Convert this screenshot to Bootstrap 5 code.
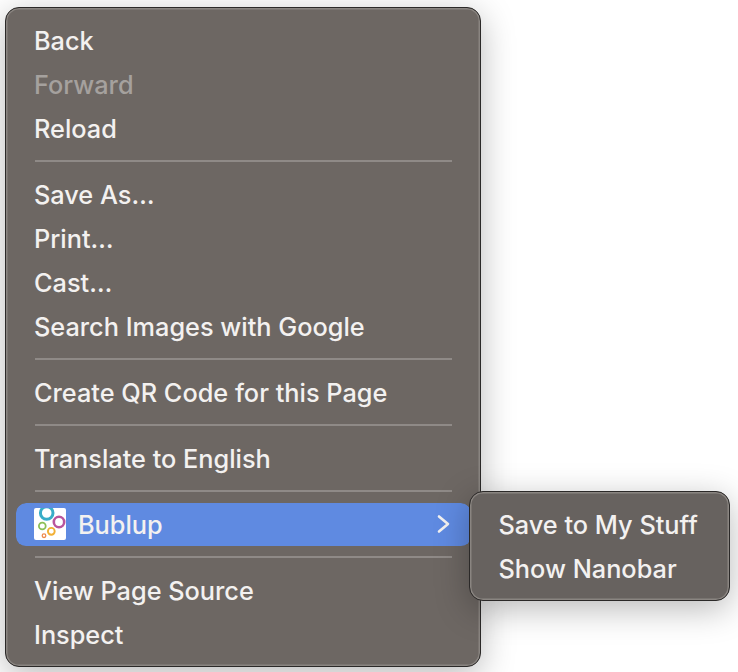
<!DOCTYPE html>
<html lang="en"><head><meta charset="utf-8"><title>Context menu</title>
<link href="https://cdn.jsdelivr.net/npm/bootstrap@5.3.0/dist/css/bootstrap.min.css" rel="stylesheet">
<style>
html,body{height:100%;background:#fff;overflow:hidden}
body{font-family:Inter,"Liberation Sans",sans-serif;padding:7px 0 0 5px}
.ctx-panel{background:#6d6763;border:1.5px solid #2b2928;border-radius:14px;box-shadow:inset 0 0 0 1.5px #8a8581,0 8px 34px rgba(0,0,0,.28)}
.ctx-main{width:476px;height:660px;padding:10.5px 9.5px 0;position:relative}
.ctx-item{height:44px;padding:0 18.5px;font-size:25.3px;font-weight:450;color:#f3f1f0;line-height:44px;white-space:nowrap}
.ctx-off{color:#a5a19e}
.ctx-sep{height:2px;margin:9px 19px 11px;background:#8f8a87}
.ctx-active{border-bottom:1px solid transparent;background:#5f8ae1;background-clip:padding-box;border-radius:10px;padding-right:21px}
.ctx-active .ctx-label{padding-top:1px}
.ctx-logo{width:32px;height:32px;background:#fff;border-radius:2px;display:block;margin-right:12px}
.ctx-sub{position:absolute;left:463px;top:483px;width:261px;height:110px;padding:11px 10px 0;background:#67625f}
</style></head>
<body>
<div class="ctx-panel ctx-main">
  <div class="ctx-item">Back</div>
  <div class="ctx-item ctx-off">Forward</div>
  <div class="ctx-item">Reload</div>
  <div class="ctx-sep"></div>
  <div class="ctx-item">Save As…</div>
  <div class="ctx-item">Print…</div>
  <div class="ctx-item">Cast…</div>
  <div class="ctx-item">Search Images with Google</div>
  <div class="ctx-sep"></div>
  <div class="ctx-item">Create QR Code for this Page</div>
  <div class="ctx-sep"></div>
  <div class="ctx-item">Translate to English</div>
  <div class="ctx-sep"></div>
  <div class="ctx-item ctx-active d-flex align-items-center">
    <svg class="ctx-logo flex-shrink-0" viewBox="0 0 32 32"><g fill="none"><circle cx="12.7" cy="5" r="6.3" stroke="#38adc8" stroke-width="3"/><circle cx="25" cy="14" r="5.2" stroke="#b9559d" stroke-width="2.6"/><circle cx="8.3" cy="18" r="3.4" stroke="#8cbf57" stroke-width="1.8"/><circle cx="17.3" cy="23.3" r="3.4" stroke="#f2b035" stroke-width="1.9"/><circle cx="10" cy="27.7" r="1.8" stroke="#ee8a4c" stroke-width="1.3"/></g></svg>
    <span class="ctx-label flex-grow-1">Bublup</span>
    <svg width="14" height="20" viewBox="0 0 14 20" class="flex-shrink-0"><path d="M3 2.5l9 7.5-9 7.5" fill="none" stroke="#f3f1f0" stroke-width="2.6" stroke-linecap="round" stroke-linejoin="round"/></svg>
  </div>
  <div class="ctx-sep"></div>
  <div class="ctx-item">View Page Source</div>
  <div class="ctx-item">Inspect</div>
  <div class="ctx-panel ctx-sub">
    <div class="ctx-item">Save to My Stuff</div>
    <div class="ctx-item">Show Nanobar</div>
  </div>
</div>
<script src="https://cdn.jsdelivr.net/npm/bootstrap@5.3.0/dist/js/bootstrap.bundle.min.js"></script>
</body></html>
